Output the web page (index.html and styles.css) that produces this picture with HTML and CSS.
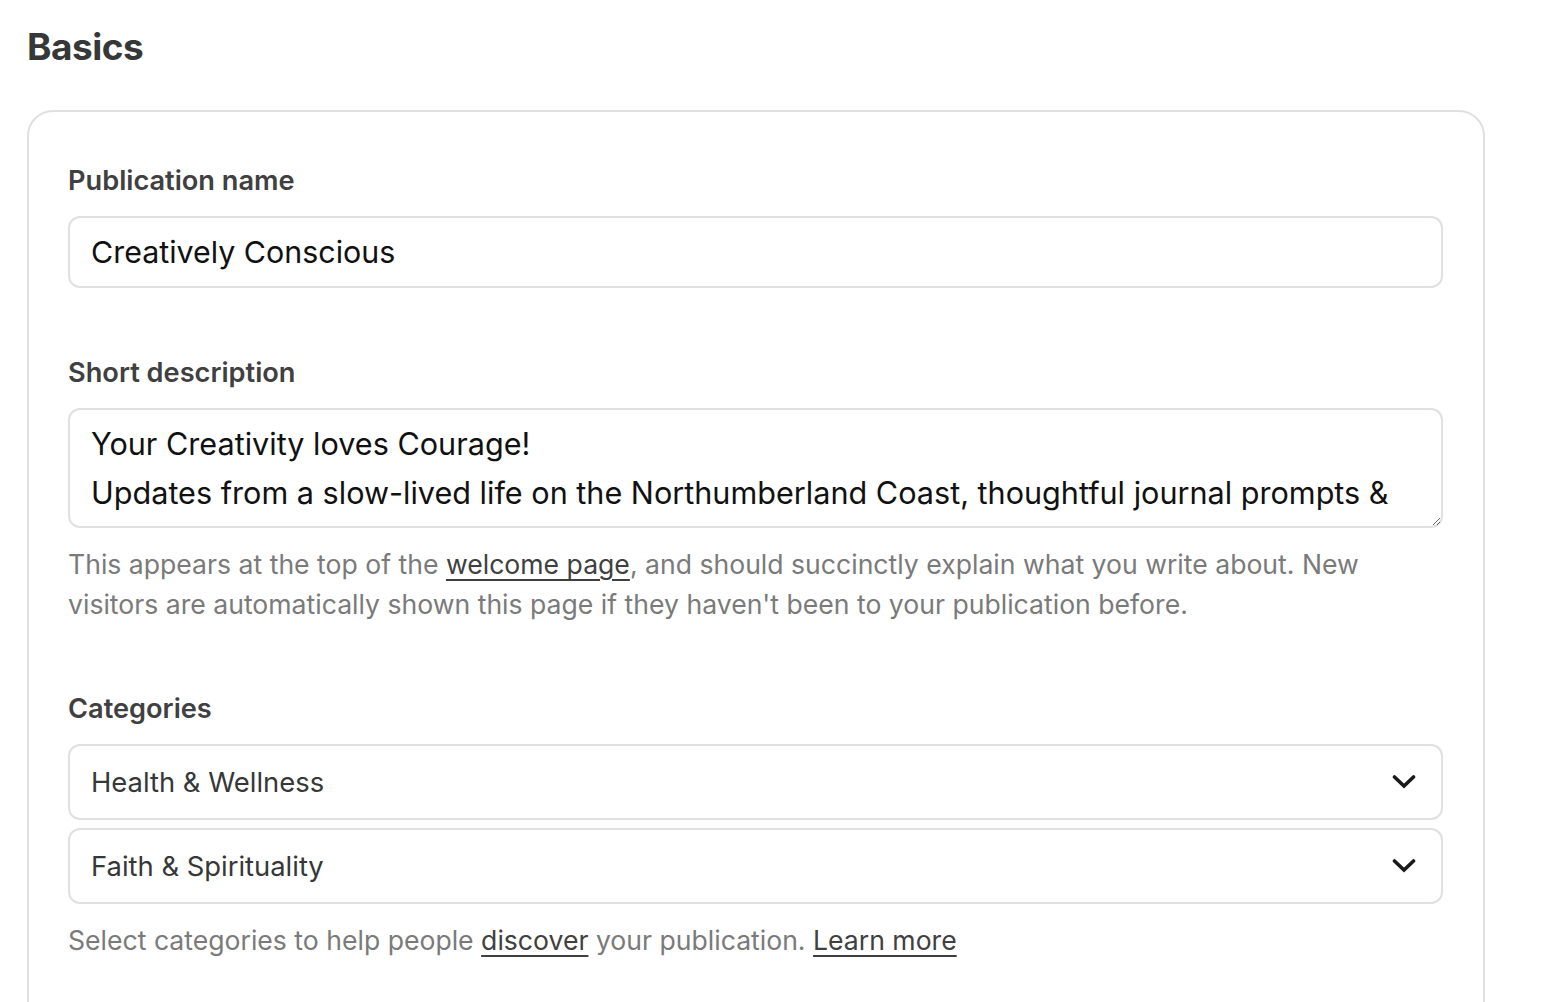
FILE: index.html
```html
<!DOCTYPE html>
<html>
<head>
<meta charset="utf-8">
<link rel="stylesheet" href="styles.css">
</head>
<body>
<main class="page">
  <h1 class="title">Basics</h1>
  <section class="card">
    <div class="field">
      <label class="label">Publication name</label>
      <div class="input">Creatively Conscious</div>
    </div>
    <div class="field">
      <label class="label">Short description</label>
      <textarea class="textarea">Your Creativity loves Courage!
Updates from a slow-lived life on the Northumberland Coast, thoughtful journal prompts &amp;</textarea>
      <p class="hint">This appears at the top of the <a href="#">welcome page</a>, and should succinctly explain what you write about. New visitors are automatically shown this page if they haven't been to your publication before.</p>
    </div>
    <div class="field">
      <label class="label">Categories</label>
      <div class="selects">
        <div class="select">
          <span>Health &amp; Wellness</span>
          <svg class="chev" width="24" height="16" viewBox="0 0 24 16"><path d="M2.5 3 L12 12 L21.5 3" fill="none" stroke="#1a1a1a" stroke-width="3.6" stroke-linecap="round" stroke-linejoin="miter"/></svg>
        </div>
        <div class="select">
          <span>Faith &amp; Spirituality</span>
          <svg class="chev" width="24" height="16" viewBox="0 0 24 16"><path d="M2.5 3 L12 12 L21.5 3" fill="none" stroke="#1a1a1a" stroke-width="3.6" stroke-linecap="round" stroke-linejoin="miter"/></svg>
        </div>
      </div>
      <p class="hint hint-cat">Select categories to help people <a href="#">discover</a> your publication. <a href="#">Learn more</a></p>
    </div>
  </section>
</main>
</body>
</html>
```

FILE: styles.css
```css
* { box-sizing: border-box; }
html, body { margin: 0; padding: 0; background: #fff; }
body {
  font-family: Inter, "Noto Sans", "Liberation Sans", sans-serif;
  color: #363737;
  overflow: hidden;
  height: 1002px;
}
.page {
  padding: 22px 60px 0 27px;
}
.title {
  margin: 0;
  font-size: 37px;
  font-weight: 700;
  letter-spacing: -0.5px;
  line-height: 50px;
  color: #363737;
}
.card {
  margin-top: 38px;
  border: 2px solid #e0e0e0;
  border-radius: 26px;
  padding: 51px 40px 60px 39px;
  width: 1458px;
  height: 1000px;
}
.field { margin-bottom: 67px; }
.label {
  display: block;
  font-size: 27.2px;
  font-weight: 600;
  color: #404040;
  line-height: 36px;
  margin-bottom: 17px;
}
.input, .textarea, .select {
  width: 100%;
  border: 2px solid #e0e0e0;
  border-radius: 12px;
  background: #fff;
  font-family: inherit;
}
.input {
  height: 72px;
  padding: 0 21px;
  display: flex;
  align-items: center;
  font-size: 30.4px;
  color: #111;
}
.textarea {
  display: block;
  height: 120px;
  padding: 9px 21px;
  line-height: 49px;
  font-size: 30.6px;
  color: #111;
  resize: vertical;
  overflow: hidden;
  outline: none;
  margin: 0;
}
.hint {
  margin: 16px 0 0;
  font-size: 26.6px;
  line-height: 40px;
  color: #7a7a7a;
}
.hint-cat { margin-top: 16px; }
.hint a { color: #404040; text-decoration: underline; text-underline-offset: 5px; }
.selects { display: flex; flex-direction: column; gap: 8px; }
.select {
  height: 76px;
  padding: 0 25px 0 21px;
  display: flex;
  align-items: center;
  justify-content: space-between;
  font-size: 27.4px;
  color: #363737;
}
.chev { flex: none; }
```
